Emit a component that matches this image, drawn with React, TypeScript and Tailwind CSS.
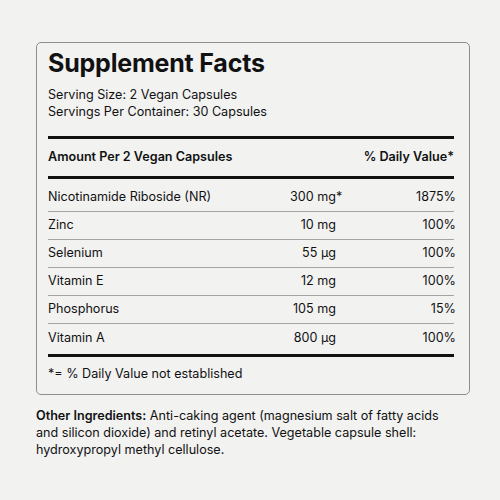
import React from "react";

const rows = [
  { name: "Nicotinamide Riboside (NR)", amount: "300 mg", star: true, dv: "1875%" },
  { name: "Zinc", amount: "10 mg", dv: "100%" },
  { name: "Selenium", amount: "55 µg", dv: "100%" },
  { name: "Vitamin E", amount: "12 mg", dv: "100%" },
  { name: "Phosphorus", amount: "105 mg", dv: "15%" },
  { name: "Vitamin A", amount: "800 µg", dv: "100%" },
];

export default function App() {
  return (
    <div
      className="h-[500px] w-[500px] bg-[#f2f2f1] pl-[36px] pt-[42px] text-[#111]"
      style={{ fontFamily: "Inter, 'Liberation Sans', sans-serif" }}
    >
      <div className="w-[434px] rounded-[5px] border border-[#8f8f8f] pb-[12px] pl-[11px] pr-[15px] pt-[2px]">
        <h1 className="text-[25px] font-bold leading-[36px] tracking-[-0.2px]">Supplement Facts</h1>
        <div className="mt-[5px] text-[12.6px] leading-[17px]">
          <p>Serving Size: 2 Vegan Capsules</p>
          <p>Servings Per Container: 30 Capsules</p>
        </div>
        <div className="mt-[16px] h-[3px] bg-[#111]" />
        <div className="flex h-[37px] items-center justify-between text-[12.6px] font-semibold">
          <span>Amount Per 2 Vegan Capsules</span>
          <span>% Daily Value*</span>
        </div>
        <div className="h-[3px] bg-[#111]" />
        <div className="pb-[2px] pt-[5px]">
          {rows.map((r, i) => (
            <div
              key={r.name}
              className={
                i < rows.length - 1
                  ? "flex h-[28px] items-center border-b border-[#a3a3a3] text-[12.6px]"
                  : "flex h-[28px] items-center text-[12.6px]"
              }
            >
              <span className="flex-1">{r.name}</span>
              <span className="relative w-[60px] text-right">
                {r.amount}
                {r.star ? <span className="absolute left-full">*</span> : null}
              </span>
              <span className="-mr-[2px] w-[120px] text-right">{r.dv}</span>
            </div>
          ))}
        </div>
        <div className="h-[3px] bg-[#111]" />
        <p className="mt-[8px] text-[12.6px] leading-[17px]">*= % Daily Value not established</p>
      </div>
      <p className="mt-[12px] w-[412px] text-[12.6px] leading-[17px]">
        <span className="font-semibold">Other Ingredients:</span> Anti-caking agent (magnesium salt of
        fatty acids and silicon dioxide) and retinyl acetate. Vegetable capsule shell: hydroxypropyl
        methyl cellulose.
      </p>
    </div>
  );
}
